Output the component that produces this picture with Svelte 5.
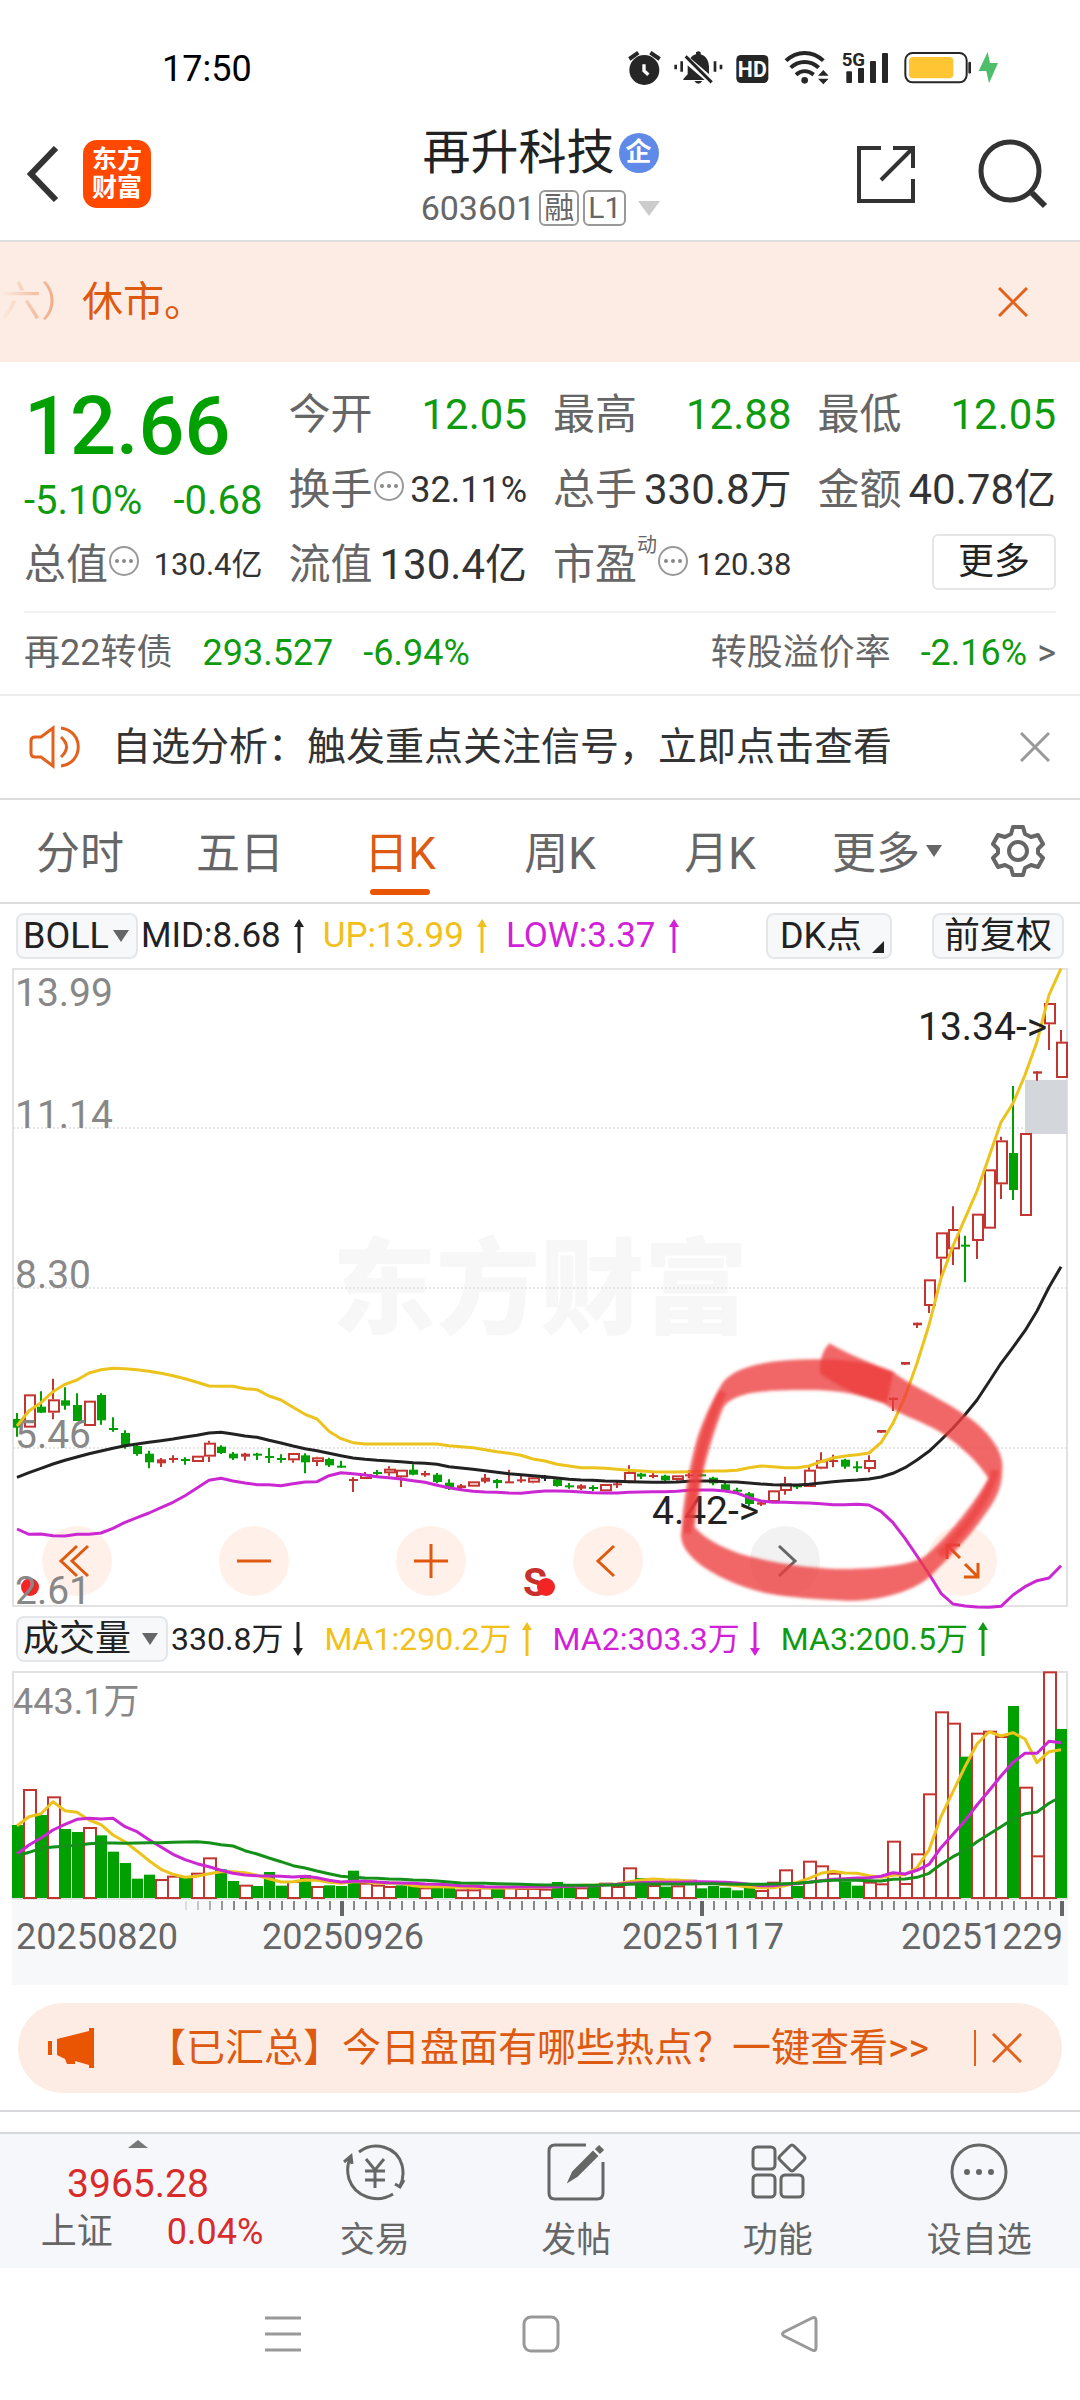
<script>
  const STEP = 12;
  const FIRST = 17;
  const cx = (i) => FIRST + STEP * i;

  // Each row: direction, high, body top, body bottom, low (thirds of a chart unit below the origin).
  const candleRuns = [
    {
      origin: 1340,
      rows: [
        ['g', 219, 237, 263, 290], ['r', 163, 163, 263, 263], ['g', 154, 200, 218, 218], ['r', 116, 178, 218, 238],
        ['g', 142, 181, 197, 209], ['g', 160, 195, 243, 243], ['r', 182, 182, 258, 258], ['g', 160, 165, 241, 254],
        ['g', 232, 264, 268, 275], ['g', 271, 279, 318, 326], ['g', 312, 318, 342, 347], ['g', 332, 341, 367, 385],
        ['r', 354, 358, 370, 381], ['r', 346, 354, 359, 368], ['g', 352, 357, 361, 374], ['r', 347, 347, 366, 366],
        ['r', 302, 308, 350, 366], ['g', 316, 320, 339, 342], ['g', 336, 341, 355, 360], ['r', 338, 341, 350, 362],
        ['g', 338, 341, 345, 360], ['g', 324, 348, 354, 369], ['g', 343, 354, 360, 368], ['r', 339, 339, 361, 368],
        ['g', 340, 346, 367, 400], ['r', 350, 352, 366, 378], ['g', 353, 357, 376, 381], ['g', 362, 377, 383, 383],
        ['r', 412, 417, 421, 456], ['r', 396, 402, 417, 417], ['g', 390, 396, 400, 407], ['r', 379, 386, 400, 407],
        ['r', 389, 389, 412, 441], ['g', 373, 389, 404, 406], ['r', 393, 399, 406, 410], ['g', 399, 404, 426, 430],
        ['g', 418, 428, 447, 450], ['r', 432, 436, 444, 448], ['r', 424, 424, 440, 440], ['r', 402, 413, 425, 430],
        ['g', 417, 420, 429, 445], ['r', 389, 424, 428, 428], ['r', 408, 418, 422, 428], ['r', 410, 412, 428, 430]
      ]
    },
    {
      origin: 1300,
      rows: [
        ['k', 525, 530, 535, 543], ['g', 535, 538, 558, 560], ['g', 549, 556, 560, 566], ['r', 553, 556, 566, 570],
        ['g', 556, 561, 567, 573], ['r', 552, 552, 574, 574], ['r', 545, 550, 556, 564], ['r', 496, 516, 548, 550],
        ['g', 518, 521, 530, 537], ['r', 518, 525, 530, 535], ['g', 524, 527, 541, 543], ['r', 526, 526, 540, 542],
        ['r', 510, 523, 528, 534], ['g', 520, 523, 528, 530], ['g', 530, 533, 550, 556], ['g', 549, 553, 570, 572],
        ['g', 563, 569, 575, 578], ['g', 576, 580, 612, 618], ['r', 602, 607, 614, 618], ['r', 571, 571, 606, 606],
        ['r', 530, 550, 573, 584], ['g', 553, 556, 561, 567], ['r', 501, 509, 561, 561], ['r', 457, 481, 506, 508],
        ['r', 464, 480, 486, 502], ['g', 476, 479, 500, 506], ['g', 484, 499, 504, 516], ['r', 466, 480, 507, 517],
        ['r', 390, 390, 398, 398], ['r', 293, 293, 300, 333], ['r', 186, 186, 194, 194]
      ]
    },
    {
      origin: 950,
      rows: [
        ['r', 1118, 1118, 1126, 1134], ['r', 988, 988, 1068, 1089], ['r', 847, 847, 926, 980], ['r', 769, 837, 898, 945],
        ['g', 857, 884, 890, 997], ['r', 791, 791, 873, 927], ['r', 658, 658, 836, 836], ['r', 560, 571, 703, 747],
        ['g', 408, 609, 720, 750], ['r', 549, 549, 798, 798], ['r', 364, 364, 371, 392], ['r', 159, 159, 223, 300],
        ['r', 240, 275, 384, 384]
      ]
    }
  ];
  const candles = candleRuns
    .flatMap((run) => run.rows.map(([dir, ...v]) => [dir, ...v.map((n) => run.origin + n / 3)]))
    .map(([dir, high, top, bottom, low], i) => ({ dir, high, top, bottom, low, x: cx(i) }));

  const trace = (runs) =>
    runs
      .flatMap(([origin, values]) => values.map((v) => origin + v / 3))
      .map((y, i) => `${cx(i)},${y.toFixed(1)}`)
      .join(' ');

  const upper = trace([
    [1340, [258, 212, 188, 155, 133, 120, 99, 89, 85, 86, 89, 94, 100, 107, 116, 127, 138, 139, 139, 146, 149, 168, 180, 202, 223, 237, 274, 296, 308, 312, 312, 312, 312, 312, 312, 312, 317, 320, 323, 329, 335, 340, 346, 357]],
    [1300, [483, 493, 498, 503, 503, 505, 508, 511, 513, 515, 516, 516, 515, 514, 513, 513, 511, 503, 498, 500, 503, 503, 498, 485, 474, 468, 464, 459, 428, 370, 290, 190, 75]],
    [950, [985, 888, 805, 723, 620, 517, 460, 375, 275, 135, 55]]
  ]);
  const middle = trace([
    [1340, [412, 398, 385, 372, 361, 351, 341, 333, 325, 317, 312, 307, 302, 297, 291, 286, 279, 277, 282, 288, 292, 301, 309, 318, 326, 332, 340, 347, 354, 358, 361, 363, 365, 368, 370, 373, 380, 384, 388, 392, 397, 401, 404, 407]],
    [1300, [530, 534, 538, 540, 541, 543, 544, 545, 546, 547, 547, 546, 544, 543, 543, 545, 546, 549, 552, 554, 555, 555, 553, 549, 545, 542, 540, 537, 531, 520, 503, 480, 454, 420, 384, 344, 300, 245, 190, 142]],
    [950, [1142, 1083, 1012, 950]]
  ]);
  const lower = trace([
    [1340, [567, 583, 582, 587, 588, 583, 583, 579, 565, 547, 533, 519, 503, 487, 467, 444, 421, 415, 423, 429, 434, 434, 437, 431, 426, 425, 407, 398, 401, 405, 410, 413, 417, 422, 427, 436, 443, 449, 454, 456, 457, 459, 460, 456]],
    [1300, [573, 573, 574, 576, 578, 579, 579, 577, 576, 575, 575, 574, 571, 570, 570, 573, 579, 593, 603, 607, 607, 608, 609, 611, 614, 614, 613, 615, 634, 668, 715, 768, 822, 880, 912, 918, 921, 922, 919, 885, 860, 842, 834, 797]]
  ]);

  const volumes = (
    'g675 r567 g645 r589 g687 g696 r681 g706 g755 g789 g836 g824 r837 r827 g833 r818 r772 g808 g843 r854 g858 g816 ' +
    'g857 r843 g825 r858 g856 g858 g812 r848 r854 r858 g856 g855 r862 g862 g863 r868 r868 r862 g866 r862 r864 r864 ' +
    'r866 g846 g852 r862 g856 r848 r858 r802 g834 r855 g860 r856 r839 g865 g858 g863 g871 g864 r870 r845 r808 g858 ' +
    'r782 r796 r818 g845 g857 r845 r850 r722 r849 r760 r580 r334 r368 g470 r398 r392 r408 g318 r560 r766 r214 g387'
  )
    .split(' ')
    .map((s, i) => ({ dir: s[0], top: 1600 + Number(s.slice(1)) / 3, x: cx(i) }));

  const ma1 = trace([[1600, [677, 650, 641, 605, 632, 637, 660, 674, 705, 725, 753, 782, 808, 823, 832, 829, 821, 815, 815, 818, 826, 836, 846, 845, 840, 841, 847, 850, 845, 845, 850, 849, 850, 857, 860, 860, 861, 862, 863, 863, 864, 864, 863, 863, 862, 860, 858, 856, 856, 854, 852, 845, 840, 837, 839, 840, 843, 848, 850, 854, 857, 861, 863, 863, 857, 847, 835, 820, 814, 819, 820, 827, 832, 826, 824, 803, 750, 650, 575, 500, 432, 395, 408, 398, 417, 488, 455, 449]]]);
  const ma2 = trace([[1600, [762, 735, 714, 690, 673, 658, 655, 657, 655, 680, 695, 719, 741, 763, 779, 791, 800, 811, 820, 825, 827, 828, 829, 831, 829, 833, 841, 846, 844, 843, 846, 848, 849, 850, 852, 853, 854, 857, 858, 860, 861, 861, 861, 861, 861, 860, 859, 858, 857, 855, 853, 850, 848, 847, 847, 847, 846, 845, 846, 847, 849, 853, 857, 857, 853, 851, 847, 842, 838, 836, 834, 833, 829, 818, 822, 811, 793, 743, 703, 662, 615, 572, 528, 487, 460, 460, 424, 428]]]);
  const ma3 = trace([[1600, [768, 757, 745, 741, 739, 736, 731, 729, 729, 730, 729, 728, 728, 727, 726, 725, 728, 734, 738, 752, 762, 774, 785, 797, 804, 813, 821, 829, 832, 834, 835, 837, 838, 840, 841, 843, 846, 849, 850, 850, 851, 852, 853, 854, 855, 855, 856, 856, 856, 855, 855, 853, 852, 852, 852, 852, 852, 851, 851, 852, 853, 853, 853, 852, 851, 850, 847, 843, 841, 841, 841, 842, 843, 838, 837, 832, 820, 793, 770, 752, 725, 703, 680, 657, 641, 636, 610, 590]]]);

  const ticks = Array.from({ length: 74 }, (_, k) => {
    const x = 186 + STEP * k;
    return { x, major: x === 342 || x === 702 || x === 1062, fade: Math.min(1, 0.25 + k * 0.2) };
  });

  const priceLabels = [['13.99', 1006], ['11.14', 1128], ['8.30', 1288], ['5.46', 1448], ['2.61', 1604]];
  const dates = [['20250820', 16], ['20250926', 262], ['20251117', 622], ['20251229', 901]];

  const tabs = ['分时', '五日', '日K', '周K', '月K'];
  let active = '日K';

  const boll = [
    { text: 'MID:8.68', tone: 'ink', up: true },
    { text: 'UP:13.99', tone: 'gold', up: true },
    { text: 'LOW:3.37', tone: 'violet', up: true }
  ];
  const volumeStats = [
    { text: '330.8万', tone: 'ink', up: false },
    { text: 'MA1:290.2万', tone: 'gold', up: true },
    { text: 'MA2:303.3万', tone: 'violet', up: false },
    { text: 'MA3:200.5万', tone: 'green', up: true }
  ];
</script>

{#snippet arrow(up)}
  <svg class="arrow" class:down={!up} viewBox="0 0 12 34" aria-hidden="true">
    <path d="M6 4V34" stroke="currentColor" stroke-width="3" />
    <path d="M6 0L11 8H1Z" fill="currentColor" />
  </svg>
{/snippet}

{#snippet info()}
  <svg class="info" viewBox="0 0 32 32" aria-hidden="true">
    <circle cx="16" cy="16" r="14" fill="none" stroke="#999" stroke-width="2" />
    <circle cx="9" cy="16" r="2" fill="#888" /><circle cx="16" cy="16" r="2" fill="#888" /><circle cx="23" cy="16" r="2" fill="#888" />
  </svg>
{/snippet}

{#snippet cross()}
  <svg class="cross" viewBox="0 0 30 30" aria-hidden="true">
    <path d="M1 1L29 29M29 1L1 29" stroke="currentColor" stroke-width="3" fill="none" />
  </svg>
{/snippet}

<div class="screen">
  <div class="status">
    <time>17:50</time>
    <svg class="status-icons" viewBox="50 30 1128 120" aria-hidden="true">
      <g fill="#262626">
        <circle cx="102" cy="93" r="45" />
        <path d="M57 60L84 41M120 41L148 60" stroke="#262626" stroke-width="12" />
        <path d="M101 76V95L114 107" stroke="#fff" stroke-width="10" fill="none" />
        <path d="M219 132V120L232 106V84C232 62 245 49 257 46V40Q264 33 271 40V46C285 50 296 64 296 84V106L309 120V123H219Z" />
        <path d="M252 126H276Q264 143 252 126Z" />
        <path d="M222 56L306 128" stroke="#fff" stroke-width="22" />
        <path d="M226 52L304 130" stroke="#262626" stroke-width="9" />
        <path d="M196 77V91M214 67V98M314 67V98M332 77V91" stroke="#262626" stroke-width="8" />
        <rect x="378" y="48" width="96" height="84" rx="14" />
        <path d="M527 65C560 34 606 34 639 65M541 86C565 63 601 63 625 86M557 107C573 93 593 93 610 107" fill="none" stroke="#262626" stroke-width="12" />
        <circle cx="583" cy="124" r="10" />
        <path d="M623 110L639 93L655 110ZM623 119H655L639 136Z" />
        <rect x="708" y="97" width="17" height="35" rx="3" />
        <rect x="743" y="87" width="18" height="45" rx="3" />
        <rect x="779" y="66" width="18" height="66" rx="3" />
        <rect x="815" y="42" width="18" height="90" rx="3" />
      </g>
      <text x="426" y="113" text-anchor="middle" class="svg-bold" font-size="64" fill="#fff">HD</text>
      <text x="694" y="80" class="svg-bold" font-size="56" fill="#262626">5G</text>
      <rect x="885" y="42" width="184" height="88" rx="22" fill="#fff" stroke="#262626" stroke-width="6" />
      <rect x="896" y="54" width="133" height="64" rx="12" fill="#ffc533" />
      <rect x="1074" y="68" width="8" height="36" rx="4" fill="#262626" />
      <path d="M1132 39L1105 96H1128L1136 133L1163 72H1139Z" fill="#4fbe6c" />
    </svg>
  </div>

  <header>
    <div class="head-left">
      <button aria-label="返回">
        <svg width="32" height="56" viewBox="0 0 32 56"><path d="M29 2L4 28L29 54" fill="none" stroke="#333" stroke-width="6" /></svg>
      </button>
      <a class="logo" href="#home">东方<br />财富</a>
    </div>
    <div class="title">
      <h1>再升科技<span class="badge">企</span></h1>
      <p>603601<span class="tag">融</span><span class="tag">L1</span><i class="tri"></i></p>
    </div>
    <div class="head-right">
      <button aria-label="分享">
        <svg width="60" height="60" viewBox="0 0 60 60" fill="none" stroke="#333" stroke-width="4">
          <path d="M25 4H3V57H57V35M37 4H57V24M56 5L25 36" />
        </svg>
      </button>
      <button aria-label="搜索">
        <svg width="70" height="70" viewBox="0 0 70 70" fill="none" stroke="#333" stroke-width="5">
          <circle cx="32" cy="32" r="29" /><path d="M54 54L67 67" stroke-width="6" />
        </svg>
      </button>
    </div>
  </header>

  <div class="notice">
    <span><span class="fade">六）</span>休市。</span>
    <button class="orange" aria-label="关闭公告">{@render cross()}</button>
  </div>

  <section class="quote">
    <div class="main-price">
      <strong>12.66</strong>
      <div><span>-5.10%</span><span>-0.68</span></div>
    </div>
    <div class="cell"><span class="k">今开</span><b class="green">12.05</b></div>
    <div class="cell"><span class="k">最高</span><b class="green">12.88</b></div>
    <div class="cell"><span class="k">最低</span><b class="green">12.05</b></div>
    <div class="cell"><span class="k">换手{@render info()}</span><b class="mid">32.11%</b></div>
    <div class="cell"><span class="k">总手</span><b>330.8万</b></div>
    <div class="cell"><span class="k">金额</span><b>40.78亿</b></div>
    <div class="cell"><span class="k">总值{@render info()}</span><b class="small">130.4亿</b></div>
    <div class="cell"><span class="k">流值</span><b>130.4亿</b></div>
    <div class="cell"><span class="k">市盈<sup>动</sup>{@render info()}</span><b class="small">120.38</b></div>
    <div class="cell end"><button class="more">更多</button></div>
  </section>

  <a class="bond" href="#bond">
    <span>再22转债</span><span class="green">293.527</span><span class="green">-6.94%</span>
    <span class="push">转股溢价率</span><span class="green">-2.16%</span><span class="gt">&gt;</span>
  </a>

  <div class="analysis">
    <svg width="52" height="44" viewBox="0 0 52 44" fill="none" stroke="#e2611c" stroke-width="3" aria-hidden="true">
      <path d="M24 3V41L12 32H6Q2 32 2 28V16Q2 12 6 12H12ZM32 12Q43 22 32 32M32 3C55 6 55 38 32 41" />
    </svg>
    <span>自选分析：触发重点关注信号，立即点击查看</span>
    <button class="grey" aria-label="关闭分析">{@render cross()}</button>
  </div>

  <nav class="tabs">
    {#each tabs as tab}
      <button class:active={tab === active} on:click={() => (active = tab)}><span>{tab}</span></button>
    {/each}
    <button class="expand"><span>更多</span><i class="caret"></i></button>
    <button aria-label="设置" class="gear">
      <svg width="54" height="54" viewBox="0 0 54 54" fill="none" stroke="#666" stroke-width="4" stroke-linejoin="round">
        <path d="M22 3H32L34 10L40 13L47 11L52 20L47 25V29L52 34L47 43L40 41L34 44L32 51H22L20 44L14 41L7 43L2 34L7 29V25L2 20L7 11L14 13L20 10Z" />
        <circle cx="27" cy="27" r="9" />
      </svg>
    </button>
  </nav>

  <div class="indicator">
    <label class="pick boll"><select aria-label="主图指标"><option>BOLL</option></select><i class="caret"></i></label>
    <div class="stats">
      {#each boll as s}<span class={s.tone}>{s.text}{@render arrow(s.up)}</span>{/each}
    </div>
    <button class="chip dk">DK点<i class="corner"></i></button>
    <button class="chip">前复权</button>
  </div>

  <div class="chart">
    <div class="controls">
      <button aria-label="最左"><svg viewBox="0 0 70 70"><path d="M35 20L19 35L35 50M46 20L30 35L46 50" /></svg></button>
      <button aria-label="缩小"><svg viewBox="0 0 70 70"><path d="M18 35H52" /></svg></button>
      <button aria-label="放大"><svg viewBox="0 0 70 70"><path d="M18 35H52M35 18V52" /></svg></button>
      <button aria-label="左移"><svg viewBox="0 0 70 70"><path d="M41 20L25 35L41 50" /></svg></button>
      <button aria-label="右移" class="off"><svg viewBox="0 0 70 70"><path d="M29 20L45 35L29 50" /></svg></button>
      <button aria-label="全屏"><svg viewBox="0 0 70 70"><path d="M33 19H20V33M20 19L33 32M38 38L51 51M51 37V51H37" /></svg></button>
    </div>
    <svg class="plot" viewBox="12 968 1056 639" role="img" aria-label="日K线图">
      <defs>
        <filter id="soft" x="-5%" y="-5%" width="110%" height="110%"><feGaussianBlur stdDeviation="4" /></filter>
      </defs>
      <text x="332" y="1326" class="watermark">东方财富</text>
      <g stroke="#e6e6e6" stroke-width="2" stroke-dasharray="2 2">
        <path d="M13 1128H1067M13 1288H1067M13 1448H1067" />
      </g>
      <rect x="13" y="969" width="1054" height="637" fill="none" stroke="#e2e2e2" stroke-width="2" />
      <circle cx="30" cy="1587" r="9" fill="#f22424" />
      <text x="523" y="1596" class="svg-bold" font-size="39" fill="#c8302e">S</text>
      <circle cx="546" cy="1587" r="9" fill="#f22424" />
      <rect x="1025" y="1080" width="42" height="54" fill="#d3d7dc" />
      {#each candles as c}
        {#if c.dir === 'r' && c.bottom - c.top > 4.5}
          <path d="M{c.x} {c.high}V{c.top}M{c.x} {c.bottom}V{c.low}" stroke="#c23531" stroke-width="2" />
          <rect x={c.x - 4} y={c.top + 1} width="10" height={c.bottom - c.top - 2} fill="none" stroke="#c23531" stroke-width="2" />
        {:else}
          <path d="M{c.x} {c.high}V{c.low}" class="wick {c.dir}" />
          <rect x={c.x - 4} y={c.top} width="9" height={Math.max(2, c.bottom - c.top)} class="body {c.dir}" />
        {/if}
      {/each}
      {#each priceLabels as [label, y]}<text x="15" {y} class="axis">{label}</text>{/each}
      <g fill="none" stroke-width="3" stroke-linejoin="round">
        <polyline points={middle} stroke="#222" />
        <polyline points={upper} stroke="#ecc31c" />
        <polyline points={lower} stroke="#cb27d2" />
      </g>
      <text x="918" y="1040" class="mark">13.34-&gt;</text>
      <text x="652" y="1524" class="mark">4.42-&gt;</text>
      <g transform="translate(540 1300) scale(.3333)" fill="#ed3b3b">
        <g filter="url(#soft)">
          <path fill-opacity=".78" fill-rule="evenodd" d="M840 178C930 178 1000 190 1060 215C1110 258 1200 290 1290 355C1345 395 1392 455 1387 505C1388 570 1360 610 1330 650C1290 710 1230 770 1170 830C1110 880 1010 903 920 902C820 898 750 893 680 880C590 858 520 825 470 785C430 750 418 720 425 690C428 610 450 490 470 420C485 370 520 290 550 245C600 188 720 178 840 178ZM830 270C740 270 660 270 610 285C570 297 552 312 545 335C520 400 490 500 480 570L464 680C500 725 580 758 640 772C740 797 850 808 930 807C1020 805 1110 795 1150 772C1200 735 1300 620 1345 535C1320 490 1260 435 1200 395C1140 362 1080 345 1030 310C970 285 900 272 830 270Z" />
          <path fill-opacity=".78" d="M868 130C920 160 990 190 1060 215L1040 310C960 295 890 255 840 220Q838 160 868 130Z" />
          <path fill="none" stroke="#ed3b3b" stroke-opacity=".6" stroke-width="24" d="M550 275C500 360 470 500 458 590L440 700M1366 510C1352 580 1290 670 1200 765" />
        </g>
      </g>
    </svg>
  </div>

  <div class="indicator">
    <label class="pick vol"><select aria-label="副图指标"><option>成交量</option></select><i class="caret"></i></label>
    <div class="stats dense">
      {#each volumeStats as s}<span class={s.tone}>{s.text}{@render arrow(s.up)}</span>{/each}
    </div>
  </div>

  <div class="chart">
    <svg class="plot" viewBox="12 1671 1056 314" role="img" aria-label="成交量图">
      <rect x="12" y="1901" width="1056" height="84" fill="#f7f8fa" />
      <rect x="13" y="1672" width="1054" height="227" fill="none" stroke="#e2e2e2" stroke-width="2" />
      {#each volumes as v}
        {#if v.dir === 'g'}
          <rect x={v.x - 5} y={v.top} width="11" height={1898 - v.top} fill="#00a000" />
        {:else}
          <rect x={v.x - 5} y={v.top + 1} width="12" height={1897 - v.top} fill="#fff" stroke="#c23531" stroke-width="2" />
        {/if}
      {/each}
      <g fill="none" stroke-width="3" stroke-linejoin="round">
        <polyline points={ma1} stroke="#ecc31c" />
        <polyline points={ma2} stroke="#cb27d2" />
        <polyline points={ma3} stroke="#15911a" />
      </g>
      <text x="13" y="1714" class="axis volume">443.1万</text>
      {#each ticks as t}
        <rect x={t.major ? t.x - 2 : t.x - 1} y="1901" width={t.major ? 4 : 2} height={t.major ? 15 : 9} fill={t.major ? '#666' : '#888'} opacity={t.fade} />
      {/each}
      {#each dates as [d, x]}<text {x} y="1949" class="date">{d}</text>{/each}
    </svg>
  </div>

  <div class="banner">
    <svg width="46" height="40" viewBox="0 0 46 40" fill="#ea5504" aria-hidden="true">
      <path d="M0 13H4V27H0ZM9 11L41 3V0H46V40H41V37L27 33V36H19L17 31L9 27Z" />
    </svg>
    <a href="#hot">【已汇总】今日盘面有哪些热点？一键查看&gt;&gt;</a>
    <button class="orange" aria-label="关闭横幅">{@render cross()}</button>
  </div>

  <footer>
    <a class="index" href="#index">
      <i class="up"></i>
      <span class="points">3965.28</span>
      <span class="pair"><span>上证</span><span class="red">0.04%</span></span>
    </a>
    <button>
      <svg viewBox="0 0 66 60">
        <path d="M17 10C32 -2 55 5 60 23C62 31 61 38 58 44M62 38L58 45L53 42M51 52C35 62 13 55 7 37C5 30 5 22 9 15M2 20L9 14L10 22" />
        <path d="M24 17L33 28L42 17M33 28V46M23 29H43M23 38H43" />
      </svg>
      交易
    </button>
    <button>
      <svg viewBox="0 0 66 60">
        <path d="M43 3H12Q6 3 6 9V51Q6 57 12 57H54Q60 57 60 51V20" />
        <path d="M26 39L30 30L50 10L54 14L34 34Z" fill="#666" stroke-width="2" /><path d="M54 5L59 10" stroke-width="6" />
      </svg>
      发帖
    </button>
    <button>
      <svg viewBox="0 0 66 60">
        <rect x="8" y="5" width="22" height="22" rx="4" /><rect x="8" y="33" width="22" height="22" rx="4" /><rect x="36" y="33" width="22" height="22" rx="4" />
        <path d="M45 4Q47 2 49 4L59 14Q61 16 59 18L49 28Q47 30 45 28L35 18Q33 16 35 14Z" />
      </svg>
      功能
    </button>
    <button>
      <svg viewBox="0 0 66 60">
        <circle cx="33" cy="30" r="27" /><g fill="#666" stroke="none"><circle cx="21" cy="30" r="3" /><circle cx="33" cy="30" r="3" /><circle cx="45" cy="30" r="3" /></g>
      </svg>
      设自选
    </button>
  </footer>

  <div class="system">
    <button aria-label="最近任务"><svg viewBox="0 0 40 40"><path d="M2 4H38M2 20H38M2 36H38" /></svg></button>
    <button aria-label="主屏幕"><svg viewBox="0 0 40 40"><rect x="3" y="3" width="34" height="34" rx="7" /></svg></button>
    <button aria-label="后退"><svg viewBox="0 0 40 40"><path d="M33 4Q37 2 37 7V33Q37 38 33 36L5 22Q2 20 5 18Z" /></svg></button>
  </div>
</div>

<style>
  :global(body) { background: #fff; }
  .screen {
    font-family: Roboto, "Noto Sans CJK SC", sans-serif;
    font-size: 36px;
    line-height: 48px;
    color: #333;
    overflow: hidden;
  }
  * { box-sizing: border-box; }
  button, select {
    font: inherit;
    color: inherit;
    background: none;
    border: 0;
    padding: 0;
    margin: 0;
    appearance: none;
  }
  button { display: flex; align-items: center; justify-content: center; }
  a { color: inherit; text-decoration: none; }
  b { font-weight: 400; }
  i { display: block; }
  .green { color: #0f9b0f; }
  .red { color: #d92b2b; }
  .ink { color: #222; }
  .gold { color: #f2c01a; }
  .violet { color: #d21fd8; }
  .svg-bold { font-weight: 700; }
  .orange { color: #e2611c; }
  .grey { color: #999; }
  .cross { width: 30px; height: 30px; }

  .status {
    display: flex;
    align-items: center;
    justify-content: space-between;
    height: 112px;
    padding: 26px 77px 0 162px;
    color: #000;
  }
  .status-icons { width: 376px; height: 40px; }

  header {
    display: grid;
    grid-template-columns: 1fr auto 1fr;
    align-items: center;
    height: 130px;
    padding: 0 32px 4px 27px;
    border-bottom: 2px solid #ddd;
  }
  .head-left, .head-right { display: flex; align-items: center; gap: 24px; }
  .head-right { justify-content: flex-end; gap: 62px; }
  .logo {
    width: 68px;
    height: 68px;
    padding-top: 6px;
    border-radius: 14px;
    background: #ff4800;
    color: #fff;
    font-size: 25px;
    font-weight: 700;
    line-height: 28px;
    text-align: center;
  }
  .title { padding: 12px 0 0 6px; }
  h1, p { display: flex; align-items: center; justify-content: center; margin: 0; height: 56px; }
  h1 { font-size: 48px; font-weight: 400; color: #222; }
  p { height: 54px; font-size: 34px; color: #666; gap: 4px; }
  .badge {
    width: 40px;
    height: 40px;
    margin-left: 4px;
    border-radius: 50%;
    background: #5f8ae8;
    color: #fff;
    font-size: 26px;
    font-weight: 700;
    line-height: 38px;
    text-align: center;
  }
  .tag { padding: 0 3px; border: 2px solid #999; border-radius: 6px; font-size: 30px; line-height: 32px; }
  .tri { margin-left: 8px; border: 11px solid transparent; border-top: 15px solid #ccc; border-bottom: 0; }

  .notice {
    display: flex;
    align-items: center;
    justify-content: space-between;
    height: 120px;
    padding-right: 52px;
    background: #fcece3;
    font-size: 41px;
    color: #dd5a10;
  }
  .fade {
    background: linear-gradient(90deg, #fcece3, #e88a55);
    background-clip: text;
    color: transparent;
  }

  .quote {
    display: grid;
    grid-template-columns: repeat(4, 1fr);
    grid-template-rows: repeat(3, 75px);
    column-gap: 26px;
    margin: 0 24px;
    padding: 15px 0 9px;
    border-bottom: 2px solid #f2f2f2;
    font-size: 42px;
  }
  .main-price { grid-row: span 2; color: #0f9b0f; font-size: 40px; }
  .main-price strong { display: block; font-size: 81px; font-weight: 500; line-height: 100px; color: #00a000; }
  .main-price div { display: flex; justify-content: space-between; }
  .cell { display: flex; align-items: center; justify-content: space-between; white-space: nowrap; }
  .k { display: flex; align-items: center; color: #666; }
  .mid { font-size: 36px; }
  .small { font-size: 31px; }
  .info { width: 32px; height: 32px; margin-bottom: 8px; }
  sup { align-self: flex-start; margin-top: -6px; font-size: 20px; line-height: 20px; }
  .end { justify-content: flex-end; padding-bottom: 5px; }
  .more { width: 124px; height: 56px; border: 2px solid #e6e6e6; border-radius: 6px; font-size: 36px; color: #222; }

  .bond { display: flex; align-items: center; height: 83px; padding: 0 24px 2px; border-bottom: 2px solid #eee; color: #666; gap: 30px; }
  .bond .green { color: #0f9b0f; }
  .push { margin-left: auto; }
  .gt { margin-left: -20px; }

  .analysis { display: flex; align-items: center; height: 104px; padding: 0 30px 0 29px; border-bottom: 2px solid #ddd; font-size: 39px; gap: 31px; }
  .analysis button { margin-left: auto; }

  .tabs { display: grid; grid-template-columns: repeat(6, 4fr) 3fr; height: 104px; border-bottom: 2px solid #ddd; font-size: 44px; color: #666; }
  .tabs button { position: relative; padding-top: 6px; }
  .tabs .expand { padding-left: 14px; }
  .tabs .gear { padding: 0 4px 0 0; }
  .active { color: #dd5a10; }
  .active::after {
    content: "";
    position: absolute;
    bottom: 7px;
    width: 60px;
    height: 6px;
    border-radius: 3px;
    background: #ea5504;
  }
  .caret { border: 8px solid transparent; border-top: 12px solid #666; border-bottom: 0; }
  .tabs .caret { margin: 0 0 6px 6px; }

  .indicator { display: flex; align-items: center; height: 64px; padding: 0 16px; color: #222; }
  .pick, .chip {
    display: flex;
    align-items: center;
    height: 46px;
    border: 2px solid #e4e6ea;
    border-radius: 8px;
    background: #f6f8fa;
  }
  .pick { position: relative; }
  .pick select { width: 100%; height: 42px; padding-left: 5px; line-height: 42px; }
  .pick .caret { position: absolute; right: 7px; pointer-events: none; }
  .boll { width: 122px; }
  .vol { width: 152px; }
  .vol .caret { right: 8px; }
  .stats { display: flex; gap: 18px; margin: 0 auto 0 3px; font-size: 35px; white-space: nowrap; }
  .stats span { display: flex; align-items: center; gap: 12px; }
  .dense { font-size: 32px; gap: 20px; }
  .dense span { gap: 9px; }
  .arrow { width: 12px; height: 34px; }
  .down { transform: rotate(180deg); }
  .chip { width: 132px; }
  .dk { position: relative; width: 126px; padding-right: 16px; margin-right: 40px; }
  .corner { position: absolute; right: 6px; bottom: 4px; border-left: 12px solid transparent; border-bottom: 12px solid #222; }

  .chart { position: relative; margin: 0 12px; }
  .plot { display: block; position: relative; width: 100%; overflow: visible; pointer-events: none; }
  .controls {
    position: absolute;
    left: 0;
    right: 0;
    bottom: 11px;
    display: flex;
    justify-content: space-between;
    padding: 0 71px 0 30px;
  }
  .controls button { width: 70px; height: 70px; border-radius: 50%; background: #fff1e9; }
  .controls svg { width: 70px; height: 70px; fill: none; stroke: #dd5a10; stroke-width: 3; }
  .controls .off { background: #f2f2f2; }
  .controls .off svg { stroke: #666; }
  .watermark { font-size: 104px; font-weight: 900; fill: #f7f7f7; }
  .axis { font-size: 39px; fill: #888; }
  .volume { font-size: 36px; }
  .mark { font-size: 39px; fill: #222; }
  .date { font-size: 36px; fill: #666; }
  .wick { stroke-width: 2; }
  .wick.r { stroke: #c23531; }
  .wick.g { stroke: #00a000; }
  .wick.k { stroke: #222; }
  .body.r { fill: #c23531; }
  .body.g { fill: #00a000; }
  .body.k { fill: #222; }

  .banner {
    display: flex;
    align-items: center;
    height: 90px;
    margin: 18px 18px 17px;
    padding: 0 40px 0 30px;
    border-radius: 45px;
    background: #fcece3;
    color: #dd5a10;
    font-size: 39px;
    white-space: nowrap;
  }
  .banner a { margin-left: 53px; }
  .banner button { height: 36px; margin-left: auto; padding-left: 16px; border-left: 2px solid #e2611c; }

  footer {
    display: grid;
    grid-template-columns: 274px repeat(4, 1fr);
    height: 158px;
    border-top: 2px solid #d8d8dc;
    padding-top: 20px;
    font-size: 35px;
    color: #666;
    background: linear-gradient(#fff 20px, #d6d8dc 20px, #d6d8dc 22px, #f5f7fa 22px);
  }
  footer > * { padding-top: 8px; }
  footer button { flex-direction: column; justify-content: flex-start; padding-top: 10px; gap: 15px; }
  footer svg { width: 66px; height: 60px; fill: none; stroke: #666; stroke-width: 3; }
  .index { display: flex; flex-direction: column; align-items: center; padding-left: 2px; }
  .up { border: 10px solid transparent; border-bottom: 8px solid #777; border-top: 0; }
  .points { margin-top: 12px; font-size: 39px; color: #d92b2b; }
  .pair { display: flex; gap: 54px; padding-left: 28px; font-size: 36px; }

  .system { display: flex; justify-content: center; height: 132px; padding-left: 2px; }
  .system button { width: 258px; }
  .system svg { width: 40px; height: 40px; fill: none; stroke: #999; stroke-width: 3; }
</style>
